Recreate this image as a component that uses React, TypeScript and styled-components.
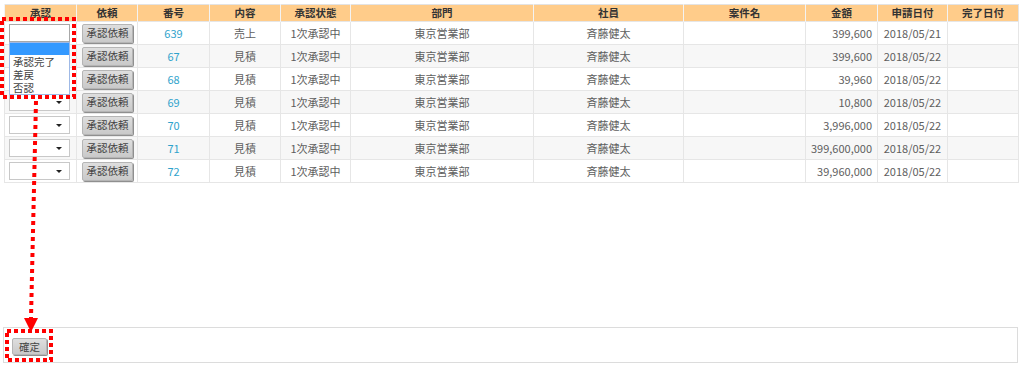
import styled, { createGlobalStyle } from 'styled-components'

const GlobalStyle = createGlobalStyle`
  html, body {
    margin: 0;
    padding: 0;
    background: #fff;
  }
  body {
    font-family: "Noto Sans CJK JP", "Noto Sans", sans-serif;
    font-size: 11px;
    color: #555;
  }
`

interface Row {
  no: number
  kind: string
  amount: string
  date: string
}

const rows: Row[] = [
  { no: 639, kind: '売上', amount: '399,600', date: '2018/05/21' },
  { no: 67, kind: '見積', amount: '399,600', date: '2018/05/22' },
  { no: 68, kind: '見積', amount: '39,960', date: '2018/05/22' },
  { no: 69, kind: '見積', amount: '10,800', date: '2018/05/22' },
  { no: 70, kind: '見積', amount: '3,996,000', date: '2018/05/22' },
  { no: 71, kind: '見積', amount: '399,600,000', date: '2018/05/22' },
  { no: 72, kind: '見積', amount: '39,960,000', date: '2018/05/22' },
]

const columns = [
  { label: '承認', width: 72 },
  { label: '依頼', width: 61 },
  { label: '番号', width: 72 },
  { label: '内容', width: 71 },
  { label: '承認状態', width: 70 },
  { label: '部門', width: 183 },
  { label: '社員', width: 150 },
  { label: '案件名', width: 122 },
  { label: '金額', width: 72 },
  { label: '申請日付', width: 70 },
  { label: '完了日付', width: 71 },
]

const Page = styled.div`
  position: relative;
  width: 1024px;
  height: 366px;
  padding: 4px 6px 0 4px;
  box-sizing: border-box;
  overflow: hidden;
`

const Table = styled.table`
  width: 1014px;
  border-collapse: collapse;
  table-layout: fixed;
  border: 1px solid #e3e3e3;
`

const Th = styled.th`
  height: 16px;
  padding: 0;
  background: #ffcc8a;
  color: #333;
  font-weight: bold;
  font-size: 10.5px;
  line-height: 16px;
  text-align: center;
  border-left: 1px solid #f3f3f3;
`

const Tr = styled.tr<{ $alt: boolean }>`
  background: ${(p) => (p.$alt ? '#f7f7f7' : '#fff')};
`

const Td = styled.td<{ $align?: string }>`
  height: 22px;
  padding: 0 5px;
  border: 1px solid #e6e6e6;
  text-align: ${(p) => p.$align || 'center'};
  font-size: 11px;
  line-height: 14px;
  color: #5e5e5e;
  white-space: nowrap;
  overflow: hidden;
`

const SelectCell = styled.td`
  position: relative;
  height: 22px;
  padding: 0 0 0 4px;
  border: 1px solid #e6e6e6;
`

const SelectBox = styled.div`
  position: relative;
  width: 59px;
  height: 16px;
  border: 1px solid #c8c8c8;
  background: #fff;
  box-sizing: content-box;

  &::after {
    content: '';
    position: absolute;
    right: 7px;
    top: 7px;
    border-left: 3px solid transparent;
    border-right: 3px solid transparent;
    border-top: 3px solid #222;
  }
`

const OpenBox = styled(SelectBox)`
  border-color: #a8a8a8;
  &::after {
    display: none;
  }
`

const DropList = styled.ul`
  position: absolute;
  left: 4px;
  top: 20px;
  width: 61px;
  margin: 0;
  padding: 0;
  list-style: none;
  background: #fff;
  border: 1px solid #9fb9e6;
  box-sizing: border-box;
  z-index: 2;
`

const DropItem = styled.li<{ $active?: boolean }>`
  height: ${(p) => (p.$active ? '12px' : '13px')};
  line-height: 13px;
  padding-left: 3px;
  font-size: 10.5px;
  color: #444;
  white-space: nowrap;
  overflow: hidden;
  background: ${(p) => (p.$active ? '#3399ff' : '#fff')};
`

const GrayButton = styled.button`
  width: 51px;
  height: 19px;
  padding: 0;
  border: 1px solid #b5b5b5;
  border-radius: 2px;
  background: linear-gradient(#dedede, #c9c9c9);
  box-shadow: 1px 1px 0 #8f8f8f;
  font-family: inherit;
  font-size: 10.5px;
  line-height: 16px;
  color: #444;
  white-space: nowrap;
  cursor: pointer;
`

const ButtonCell = styled.td`
  height: 22px;
  padding: 0 0 0 5px;
  border: 1px solid #e6e6e6;
`

const NumLink = styled.a`
  color: #2fa3cc;
  text-decoration: none;
`

const Footer = styled.div`
  margin-top: 144px;
  width: 1015px;
  height: 36px;
  margin-left: -1px;
  border: 1px solid #dcdcdc;
  display: flex;
  align-items: center;
  padding-left: 8px;
  box-sizing: border-box;
`

const ConfirmButton = styled(GrayButton)`
  width: 35px;
  height: 17px;
  margin-top: 3px;
`

const Annotation = styled.svg`
  position: absolute;
  left: 0;
  top: 0;
  pointer-events: none;
  z-index: 3;
`

export default function App() {
  return (
    <Page>
      <GlobalStyle />
      <Table>
        <colgroup>
          {columns.map((c) => (
            <col key={c.label} style={{ width: c.width }} />
          ))}
        </colgroup>
        <thead>
          <tr>
            {columns.map((c) => (
              <Th key={c.label}>{c.label}</Th>
            ))}
          </tr>
        </thead>
        <tbody>
          {rows.map((r, i) => (
            <Tr key={r.no} $alt={i % 2 === 1}>
              <SelectCell>
                {i === 0 ? (
                  <>
                    <OpenBox />
                    <DropList>
                      <DropItem $active />
                      <DropItem>承認完了</DropItem>
                      <DropItem>差戻</DropItem>
                      <DropItem>否認</DropItem>
                    </DropList>
                  </>
                ) : (
                  <SelectBox />
                )}
              </SelectCell>
              <ButtonCell>
                <GrayButton>承認依頼</GrayButton>
              </ButtonCell>
              <Td>
                <NumLink>{r.no}</NumLink>
              </Td>
              <Td>{r.kind}</Td>
              <Td>1次承認中</Td>
              <Td>東京営業部</Td>
              <Td>斉藤健太</Td>
              <Td />
              <Td $align="right">{r.amount}</Td>
              <Td>{r.date}</Td>
              <Td />
            </Tr>
          ))}
        </tbody>
      </Table>
      <Footer>
        <ConfirmButton>確定</ConfirmButton>
      </Footer>
      <Annotation width="1024" height="366" viewBox="0 0 1024 366">
        <g fill="none" stroke="#ff0000" strokeWidth="4" strokeDasharray="4 3">
          <rect x="2" y="19" width="72" height="78" />
          <line x1="36" y1="101" x2="31" y2="318" strokeDasharray="4 4" />
          <rect x="7" y="331" width="44" height="29" />
        </g>
        <polygon points="24,318 38,318 31,332" fill="#ff0000" />
      </Annotation>
    </Page>
  )
}
